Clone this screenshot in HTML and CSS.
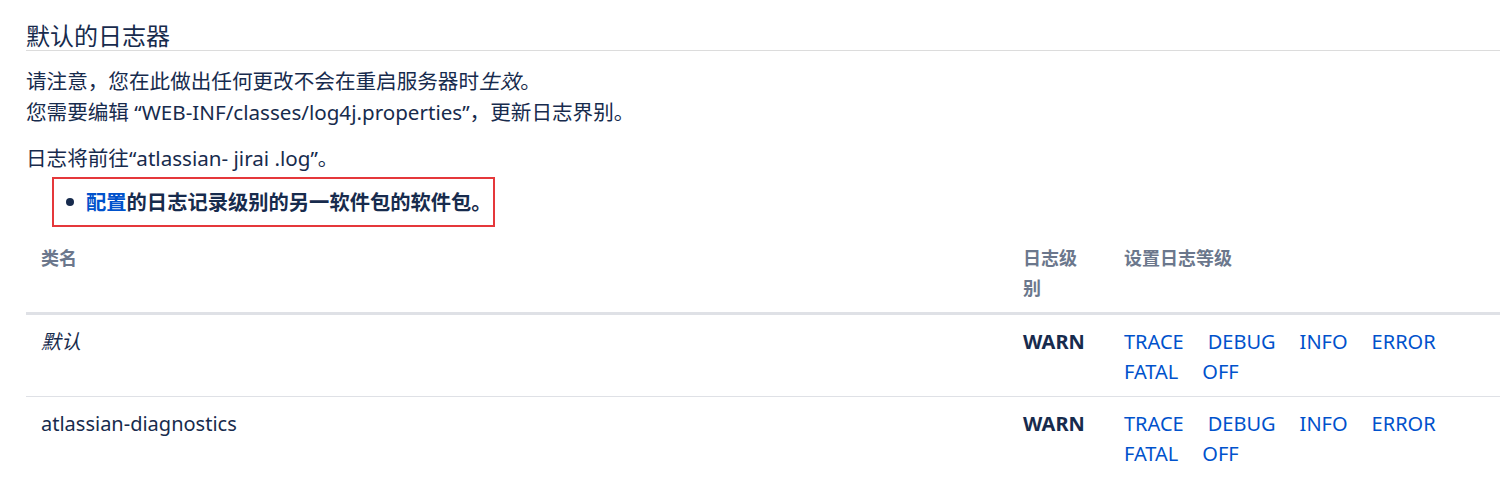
FILE: index.html
```html
<!DOCTYPE html>
<html lang="zh-CN">
<head>
<meta charset="utf-8">
<title>默认的日志器</title>
<link rel="stylesheet" href="styles.css">
</head>
<body>
<div class="page">
  <h2 class="title">默认的日志器</h2>
  <p class="note">请注意，您在此做出任何更改不会在重启服务器时<em>生效</em>。<br>您需要编辑 “WEB-INF/classes/log4j.properties”，更新日志界别。</p>
  <p class="note">日志将前往“atlassian- jirai .log”。</p>
  <ul class="actions">
    <li><a href="#">配置</a>的日志记录级别的另一软件包的软件包。</li>
  </ul>
  <table class="loggers">
    <colgroup>
      <col>
      <col class="c-level">
      <col class="c-set">
    </colgroup>
    <thead>
      <tr>
        <th>类名</th>
        <th class="lvl">日志级别</th>
        <th>设置日志等级</th>
      </tr>
    </thead>
    <tbody>
      <tr>
        <td><em>默认</em></td>
        <td class="lvl"><strong>WARN</strong></td>
        <td><div class="levels"><a href="#">TRACE</a><a href="#">DEBUG</a><a href="#">INFO</a><a href="#">ERROR</a><a href="#">FATAL</a><a href="#">OFF</a></div></td>
      </tr>
      <tr>
        <td>atlassian-diagnostics</td>
        <td class="lvl"><strong>WARN</strong></td>
        <td><div class="levels"><a href="#">TRACE</a><a href="#">DEBUG</a><a href="#">INFO</a><a href="#">ERROR</a><a href="#">FATAL</a><a href="#">OFF</a></div></td>
      </tr>
    </tbody>
  </table>
</div>
</body>
</html>
```

FILE: styles.css
```css
* { box-sizing: border-box; }
html, body { margin: 0; background: #ffffff; }
body {
  font-family: "Noto Sans", "Noto Sans CJK SC", sans-serif;
  font-size: 20px;
  color: #172b4d;
}
a { color: #0052cc; text-decoration: none; }

.page {
  padding: 22px 2px 0 26px;
}
.title {
  margin: 0;
  font-size: 24px;
  font-weight: 400;
  line-height: 28px;
  border-bottom: 1px solid #dcdcdc;
}
.note {
  margin: 15px 0 0;
  font-size: 20.6px;
  line-height: 31px;
}
.note em { font-style: italic; }

.actions {
  display: inline-flex;
  list-style: none;
  margin: 3px 0 0 26px;
  padding: 8px 1px 8px 12px;
  border: 2px solid #e5383b;
  font-size: 20.3px;
  font-weight: 700;
  line-height: 30px;
}
.actions li { display: flex; align-items: center; }
.actions li::before {
  content: "";
  width: 8px;
  height: 8px;
  border-radius: 50%;
  background: #172b4d;
  margin-right: 12px;
}

.loggers {
  width: 100%;
  margin-top: 8px;
  border-collapse: collapse;
  table-layout: fixed;
  line-height: 30px;
}
.c-level { width: 101px; }
.c-set { width: 391px; }
.loggers th {
  text-align: left;
  vertical-align: top;
  color: #6b778c;
  font-size: 18px;
  font-weight: 700;
  padding: 8px 15px 9px 15px;
  border-bottom: 3px solid #dfe1e6;
}
.loggers td {
  vertical-align: top;
  padding: 12px 15px 9px 15px;
  border-bottom: 1px solid #dfe1e6;
}
.loggers tbody tr:last-child td { border-bottom: 0; }
.loggers .lvl { padding-right: 18px; }
.loggers strong { font-weight: 700; }
.levels {
  display: flex;
  flex-wrap: wrap;
  column-gap: 24px;
}
```
